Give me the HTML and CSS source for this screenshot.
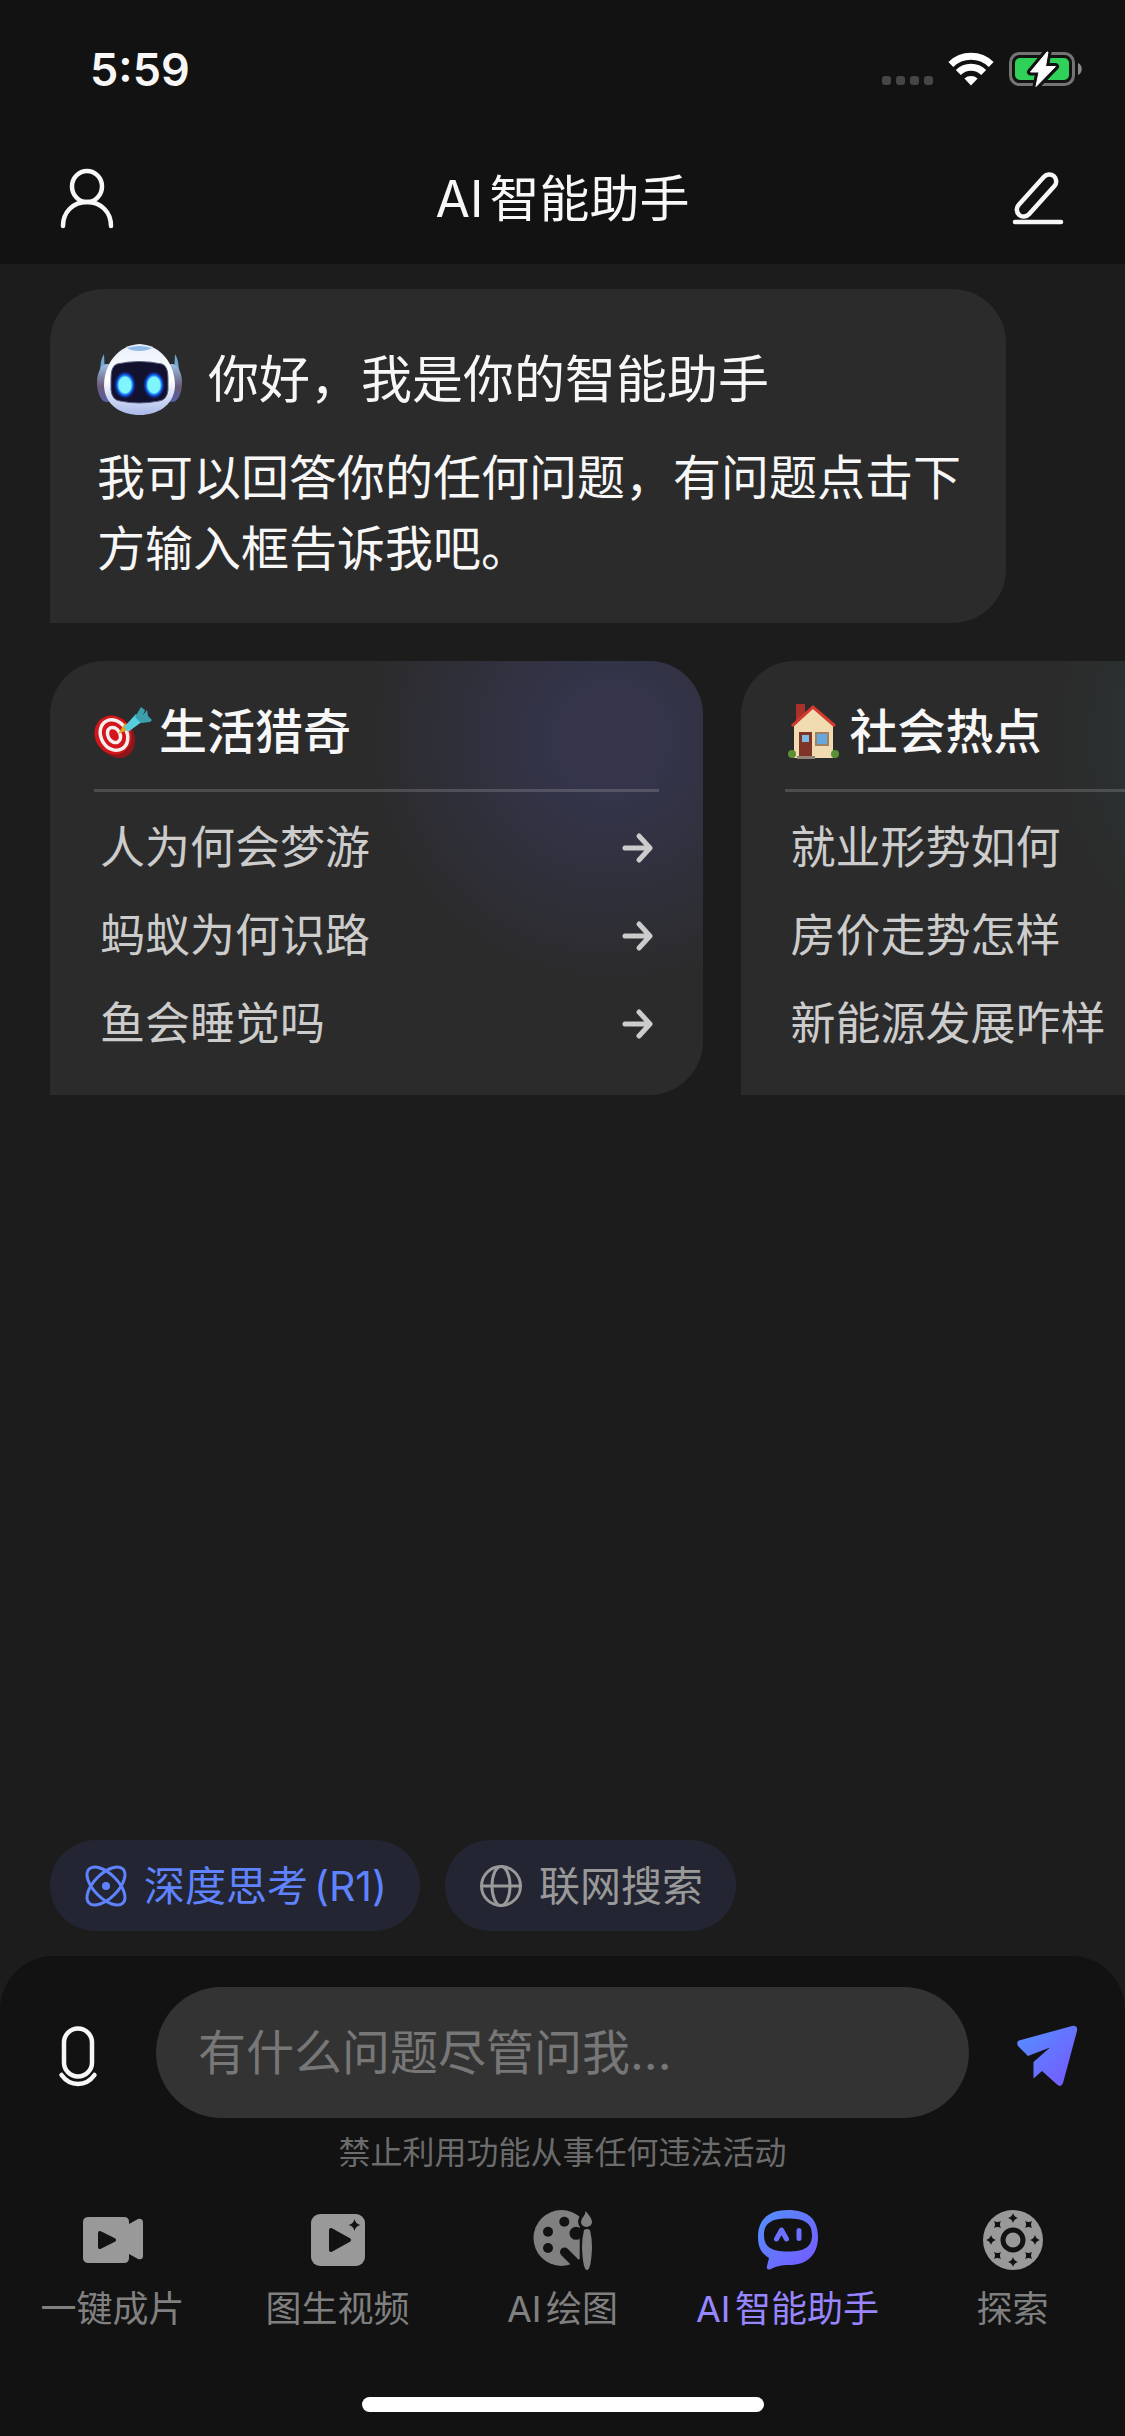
FILE: index.html
```
<!DOCTYPE html>
<html lang="zh-CN">
<head>
    <meta charset="UTF-8">
    <meta name="viewport" content="width=device-width, initial-scale=1">
    <title>AI智能助手</title>
    <link rel="stylesheet" href="styles.css">
</head>
<body>
    <header class="header">
        <div class="status-bar">
            <span class="status-time">5:59</span>
            <div class="status-icons">
                <svg width="51" height="10" viewBox="0 0 51 10" fill="#464646">
                    <rect width="9" height="9" rx="3"/>
                    <rect x="14" width="9" height="9" rx="3"/>
                    <rect x="28" width="9" height="9" rx="3"/>
                    <rect x="42" width="9" height="9" rx="3"/>
                </svg>
                <svg width="46" height="34" viewBox="0 0 46 34" fill="none" stroke="#fff" stroke-width="7">
                    <path d="M2.8 12.4A29 29 0 0 1 43.2 12.4"/>
                    <path d="M10.3 20.4A18 18 0 0 1 35.7 20.4"/>
                    <path d="M23 33.5L16.4 26.4A10 10 0 0 1 29.6 26.4Z" fill="#fff" stroke="none"/>
                </svg>
                <svg width="73" height="34" viewBox="0 0 73 34">
                    <rect x="1.5" y="1.5" width="63" height="31" rx="9" fill="none" stroke="#747474" stroke-width="3"/>
                    <path d="M69 11c5 2 5 10 0 12z" fill="#8a8a8a"/>
                    <rect x="6" y="6" width="54" height="22" rx="5" fill="#30d158"/>
                    <path d="M38 0L21.5 20H30L27 34.5L46.5 14.5H36.5L39 0Z" fill="#fff" stroke="#121212" stroke-width="7" stroke-linejoin="round"/>
                    <path d="M38 0L21.5 20H30L27 34.5L46.5 14.5H36.5L39 0Z" fill="#fff" stroke="#fff" stroke-linejoin="round"/>
                </svg>
            </div>
        </div>
        <div class="app-bar">
            <button class="icon-btn" type="button" aria-label="个人中心">
                <svg width="54" height="60" viewBox="0 0 54 60" fill="none" stroke="#f7f7f7" stroke-width="4.5" stroke-linecap="round">
                    <ellipse cx="27" cy="17.5" rx="15" ry="15.5"/>
                    <path d="M3 57C3 43 13 33 27 33S51 43 51 57"/>
                </svg>
            </button>
            <h1 class="app-title">AI智能助手</h1>
            <button class="icon-btn" type="button" aria-label="新对话">
                <svg width="54" height="54" viewBox="0 0 54 54" fill="none" stroke="#f7f7f7" stroke-width="4.5" stroke-linecap="round">
                    <rect x="-7" y="-26" width="14" height="52" rx="7" transform="translate(25.5 23.5) rotate(42)"/>
                    <path d="M4 50H50"/>
                </svg>
            </button>
        </div>
    </header>

    <main class="chat">
        <section class="welcome">
            <div class="welcome-head">
                <svg width="85" height="72" viewBox="0 0 85 72">
                    <defs>
                        <linearGradient id="shell" x1="0" y1="0" x2="0" y2="1">
                            <stop offset="0" stop-color="#e8effa"/>
                            <stop offset="0.5" stop-color="#ffffff"/>
                            <stop offset="1" stop-color="#a9b9ea"/>
                        </linearGradient>
                        <linearGradient id="ear" x1="0" y1="0" x2="0" y2="1">
                            <stop offset="0" stop-color="#9cc0e6"/>
                            <stop offset="0.6" stop-color="#6b5a78"/>
                            <stop offset="1" stop-color="#5560a8"/>
                        </linearGradient>
                        <radialGradient id="eye">
                            <stop offset="0.55" stop-color="#7ff6ff"/>
                            <stop offset="0.7" stop-color="#1377ff"/>
                            <stop offset="1" stop-color="#0a1fd0" stop-opacity="0"/>
                        </radialGradient>
                    </defs>
                    <path d="M3 30Q3 16 7 10L8 30ZM82 30Q82 16 78 10L77 30Z" fill="#6fa7cf"/>
                    <ellipse cx="10" cy="39" rx="10" ry="19" fill="url(#ear)"/>
                    <ellipse cx="75" cy="39" rx="10" ry="19" fill="url(#ear)"/>
                    <path d="M42.5 0C64 1 78 20 78 42C77 62 60 71 42.5 71S8 62 7 42C7 20 21 1 42.5 0Z" fill="url(#shell)"/>
                    <path d="M30 4Q42 0 55 4Q50 7 42 7T30 4Z" fill="#8fbbe8"/>
                    <path d="M20 20Q42 15 65 20Q71 22 71 34V46Q70 56 62 57Q42 61 23 57Q15 56 14 46V34Q14 22 20 20Z" fill="#12122e" stroke="#565f83" stroke-width="1"/>
                    <ellipse cx="28" cy="41" rx="11" ry="14" fill="url(#eye)"/>
                    <ellipse cx="57" cy="41" rx="11" ry="14" fill="url(#eye)"/>
                </svg>
                <h2 class="welcome-title">你好，我是你的智能助手</h2>
            </div>
            <p class="welcome-text">我可以回答你的任何问题，有问题点击下方输入框告诉我吧。</p>
        </section>

        <div class="topics">
            <section class="topic topic-life">
                <h3 class="topic-title">
                    <svg width="60" height="54" viewBox="0 0 60 54">
                        <ellipse cx="22" cy="32" rx="18" ry="22" fill="#8e1518" transform="rotate(-30 22 32)"/>
                        <ellipse cx="19" cy="30" rx="18" ry="20" fill="#d2161c" transform="rotate(-30 19 30)"/>
                        <g fill="none" stroke="#f4f0ef" stroke-width="3.5" transform="rotate(-30 20 30)">
                            <ellipse cx="20" cy="30" rx="13" ry="16"/>
                            <ellipse cx="20" cy="30" rx="6" ry="8"/>
                        </g>
                        <path d="M24 29L31 18L36 24Z" fill="#e3a526"/>
                        <path d="M30 22L42 9L49 16L34 27Z" fill="#55cfdc"/>
                        <path d="M41 12L47 2L51 5L49 10L53 5L54 11L58 15L56 17L47 18Z" fill="#3b9fae"/>
                    </svg>
                    生活猎奇
                </h3>
                <ul class="topic-list">
                    <li><button class="topic-row" type="button">人为何会梦游<svg width="30" height="30" viewBox="0 0 30 30"><path d="M2 15H27M16 3L27 15L16 27"/></svg></button></li>
                    <li><button class="topic-row" type="button">蚂蚁为何识路<svg width="30" height="30" viewBox="0 0 30 30"><path d="M2 15H27M16 3L27 15L16 27"/></svg></button></li>
                    <li><button class="topic-row" type="button">鱼会睡觉吗<svg width="30" height="30" viewBox="0 0 30 30"><path d="M2 15H27M16 3L27 15L16 27"/></svg></button></li>
                </ul>
            </section>
            <section class="topic topic-news">
                <h3 class="topic-title">
                    <svg width="60" height="56" viewBox="0 0 60 56">
                        <path d="M11 0H20V18H11Z" fill="#a8322b"/>
                        <path d="M9 22L28 4L48 22V54H9Z" fill="#f0dcb0"/>
                        <path d="M7 22L28 3L50 22" fill="none" stroke="#d63a2f" stroke-width="3"/>
                        <path d="M14 28H27V53H14Z" fill="#7e3426"/>
                        <path d="M17 31H24V38H17Z" fill="#7dbbe6"/>
                        <path d="M31 29H43V41H31Z" fill="#65a8dd" stroke="#a08262" stroke-width="2"/>
                        <circle cx="7" cy="50" r="4" fill="#5b9136"/>
                        <circle cx="50" cy="50" r="4" fill="#5b9136"/>
                        <path d="M12 52H30V55H12Z" fill="#8e8577"/>
                    </svg>
                    社会热点
                </h3>
                <ul class="topic-list">
                    <li><button class="topic-row" type="button">就业形势如何<svg width="30" height="30" viewBox="0 0 30 30"><path d="M2 15H27M16 3L27 15L16 27"/></svg></button></li>
                    <li><button class="topic-row" type="button">房价走势怎样<svg width="30" height="30" viewBox="0 0 30 30"><path d="M2 15H27M16 3L27 15L16 27"/></svg></button></li>
                    <li><button class="topic-row" type="button">新能源发展咋样<svg width="30" height="30" viewBox="0 0 30 30"><path d="M2 15H27M16 3L27 15L16 27"/></svg></button></li>
                </ul>
            </section>
        </div>

        <div class="modes">
            <button class="mode mode-on" type="button">
                <svg width="42" height="42" viewBox="0 0 42 42" fill="none" stroke="currentColor" stroke-width="3">
                    <ellipse cx="21" cy="21" rx="12" ry="24" transform="rotate(45 21 21)"/>
                    <ellipse cx="21" cy="21" rx="12" ry="24" transform="rotate(-45 21 21)"/>
                    <circle cx="21" cy="21" r="4" fill="currentColor" stroke="none"/>
                </svg>
                <span>深度思考<span class="mode-tag">(R1)</span></span>
            </button>
            <button class="mode" type="button">
                <svg width="42" height="42" viewBox="0 0 42 42" fill="none" stroke="currentColor" stroke-width="3">
                    <circle cx="21" cy="21" r="19.5"/>
                    <ellipse cx="21" cy="21" rx="9" ry="19.5"/>
                    <path d="M2 21H40"/>
                </svg>
                <span>联网搜索</span>
            </button>
        </div>
    </main>

    <footer class="dock">
        <form class="composer">
            <button class="composer-btn" type="button" aria-label="语音输入">
                <svg width="38" height="60" viewBox="0 0 38 60" fill="none" stroke="#f7f7f7" stroke-width="4.5" stroke-linecap="round">
                    <rect x="5" y="2.5" width="28" height="48" rx="14"/>
                    <path d="M2.5 49Q9 58 19 58T35.5 49"/>
                </svg>
            </button>
            <input class="composer-input" type="text" placeholder="有什么问题尽管问我..." aria-label="输入问题">
            <button class="composer-btn" type="submit" aria-label="发送">
                <svg width="60" height="60" viewBox="0 0 60 60">
                    <defs>
                        <linearGradient id="brand" x1="0" y1="0" x2="1" y2="1">
                            <stop offset="0" stop-color="#5391ff"/>
                            <stop offset="1" stop-color="#7856ff"/>
                        </linearGradient>
                    </defs>
                    <path d="M2 14.5L55 0Q61 -1 60 5L46 57Q44 62 40 58.5L25 45L16.5 52.5V36L33 21.5L11 30L1 20Q-1 16 2 14.5Z" fill="url(#brand)"/>
                </svg>
            </button>
        </form>
        <p class="disclaimer">禁止利用功能从事任何违法活动</p>
        <nav class="tabs">
            <a class="tab" href="#film">
                <svg width="60" height="60" viewBox="0 0 60 60">
                    <path d="M6 7H41Q46 7 46 12V14L55 9Q60 8 60 13V46Q60 50 55 49L46 44V48Q46 53 41 53H6Q0 53 0 48V12Q0 7 6 7Z" fill="#999"/>
                    <path d="M17 23L31 30L17 37Z" fill="#121212" stroke="#121212" stroke-width="4" stroke-linejoin="round"/>
                </svg>
                一键成片
            </a>
            <a class="tab" href="#video">
                <svg width="60" height="60" viewBox="0 0 60 60">
                    <rect x="3" y="4" width="54" height="52" rx="9" fill="#999"/>
                    <path d="M23 20L41 30L23 40Z" fill="#121212" stroke="#121212" stroke-width="4" stroke-linejoin="round"/>
                    <path d="M46.5 9Q47.5 14 52.5 15Q47.5 16 46.5 21Q45.5 16 40.5 15Q45.5 14 46.5 9Z" fill="#121212"/>
                </svg>
                图生视频
            </a>
            <a class="tab" href="#draw">
                <svg width="60" height="60" viewBox="0 0 60 60">
                    <circle cx="28.5" cy="28" r="28" fill="#808080"/>
                    <g fill="#121212">
                        <circle cx="15" cy="21.7" r="5"/>
                        <circle cx="15" cy="38" r="5"/>
                        <circle cx="31.3" cy="11.7" r="5"/>
                        <circle cx="43" cy="23.3" r="6.5"/>
                        <path d="M46.7 17H60V60H46.7Z"/>
                        <circle cx="53" cy="11.5" r="8"/>
                    </g>
                    <path d="M31.5 42L50 60.5" stroke="#121212" stroke-width="9" stroke-linecap="round"/>
                    <path d="M52.5 1Q59 8 59 12A5.5 5 0 0 1 48 12Q48 9 50.5 6.5Q52.5 4 52.5 1ZM51 20Q54 18 57 20Q59 28 59 38Q58 60 54 60T49 38Q49 28 51 20Z" fill="#808080"/>
                </svg>
                AI绘图
            </a>
            <a class="tab tab-active" href="#chat" aria-current="page">
                <svg width="60" height="60" viewBox="0 0 60 60">
                    <path d="M30 0C50 0 60 9 60 27C60 45 49 55 31 55C23 55 19 56 13 59Q8 61 9 56L11 48C3 43 0 37 0 27C0 9 11 0 30 0ZM30 8.5C12 8.5 6 14 6 25S12 41.5 30 41.5S54 36 54 25S48 8.5 30 8.5Z" fill="url(#brand)" fill-rule="evenodd"/>
                    <path d="M18.5 29L23.5 20L28.5 29M41 20.5V28.5" fill="none" stroke="#6b70ff" stroke-width="5" stroke-linecap="round" stroke-linejoin="round"/>
                </svg>
                AI智能助手
            </a>
            <a class="tab" href="#explore">
                <svg width="60" height="60" viewBox="0 0 60 60">
                    <defs>
                        <path id="spark" d="M30 3Q31 7 35 8Q31 9 30 13Q29 9 25 8Q29 7 30 3Z"/>
                    </defs>
                    <circle cx="30" cy="30" r="30" fill="#999"/>
                    <circle cx="30" cy="30" r="10" fill="none" stroke="#121212" stroke-width="5"/>
                    <g fill="#121212">
                        <use href="#spark"/>
                        <use href="#spark" transform="rotate(45 30 30)"/>
                        <use href="#spark" transform="rotate(90 30 30)"/>
                        <use href="#spark" transform="rotate(135 30 30)"/>
                        <use href="#spark" transform="rotate(180 30 30)"/>
                        <use href="#spark" transform="rotate(225 30 30)"/>
                        <use href="#spark" transform="rotate(270 30 30)"/>
                        <use href="#spark" transform="rotate(315 30 30)"/>
                    </g>
                </svg>
                探索
            </a>
        </nav>
        <div class="home-indicator"></div>
    </footer>
</body>
</html>
```

FILE: styles.css
```
* {
    box-sizing: border-box;
}
body {
    display: flex;
    flex-direction: column;
    min-height: 100vh;
    margin: 0;
    overflow-x: hidden;
    background-color: #1c1c1c;
    color: #f7f7f7;
    font-family: Inter, "Noto Sans CJK SC", sans-serif;
    text-autospace: normal;
}
h1, h2, h3, p, ul {
    margin: 0;
    padding: 0;
    font-weight: 400;
}
button {
    padding: 0;
    border: 0;
    background: none;
    color: inherit;
    font: inherit;
}
svg {
    display: block;
    flex: none;
    overflow: visible;
}

/* Header */
.header {
    background-color: #121212;
}
.status-bar {
    display: flex;
    justify-content: space-between;
    align-items: center;
    height: 138px;
    padding: 0 43px 0 90px;
}
.status-time {
    font-size: 45px;
    font-weight: 600;
}
.status-icons {
    display: flex;
    align-items: flex-end;
    gap: 15px;
}
.app-bar {
    display: flex;
    justify-content: space-between;
    align-items: center;
    height: 126px;
    padding: 0 50px 5px;
}
.icon-btn {
    display: flex;
    justify-content: center;
    width: 74px;
}
.app-title {
    font-size: 50px;
    line-height: 72px;
}

/* Chat area */
.chat {
    display: flex;
    flex: 1;
    flex-direction: column;
    padding: 25px 0;
}
.welcome {
    width: 85vw;
    margin-left: 50px;
    padding: 55px 44px 39px 47px;
    border-radius: 54px 54px 54px 0;
    background-color: #2b2b2b;
}
.welcome-head {
    display: flex;
    align-items: center;
    gap: 26px;
    margin-bottom: 26px;
}
.welcome-title {
    font-size: 51px;
    line-height: 72px;
}
.welcome-text {
    font-size: 48px;
    line-height: 71px;
}
.topics {
    display: flex;
    gap: 38px;
    margin-top: 38px;
    padding: 0 50px;
    overflow-x: auto;
    scrollbar-width: none;
}
.topic {
    flex: none;
    width: 58vw;
    padding: 38px 44px 27px;
    border-radius: 54px 54px 54px 0;
    background-color: #2b2b2b;
}
.topic-life {
    background-image: radial-gradient(circle at 86% 18%, #36354c 0, #34344a 60px, #2b2b2b 250px);
}
.topic-news {
    background-image: radial-gradient(circle at 86% 18%, #2b3b3c 0, #2b393a 60px, #2b2b2b 250px);
}
.topic-title {
    display: flex;
    align-items: center;
    gap: 5px;
    padding-bottom: 24px;
    border-bottom: 3px solid rgba(255, 255, 255, 0.16);
    font-size: 48px;
    font-weight: 500;
    line-height: 66px;
}
.topic-list {
    padding-top: 12px;
    list-style: none;
}
.topic-row {
    display: flex;
    justify-content: space-between;
    align-items: center;
    width: 100%;
    height: 88px;
    padding: 0 6px;
    color: #ccc;
    font-size: 45px;
    line-height: 60px;
}
.topic-row svg {
    fill: none;
    stroke: #ccc;
    stroke-width: 5;
    stroke-linecap: round;
    stroke-linejoin: round;
}
.modes {
    display: flex;
    gap: 25px;
    margin-top: auto;
    padding: 0 50px;
}
.mode {
    display: flex;
    align-items: center;
    gap: 17px;
    height: 91px;
    padding: 0 33px 0 35px;
    border-radius: 46px;
    background-color: #232632;
    color: #999;
    font-size: 41px;
    line-height: 60px;
}
.mode-on {
    color: #5f83ff;
}
.mode-tag {
    margin-left: 6px;
}

/* Bottom dock */
.dock {
    border-radius: 54px 54px 0 0;
    background-color: #121212;
}
.composer {
    display: flex;
    align-items: center;
    padding-top: 31px;
}
.composer-btn {
    display: flex;
    justify-content: center;
    width: 156px;
    padding-top: 6px;
}
.composer-input {
    flex: 1;
    min-width: 0;
    height: 131px;
    padding: 0 42px;
    border: 0;
    border-radius: 66px;
    outline: 0;
    background-color: #333;
    color: #f7f7f7;
    font: inherit;
    font-size: 48px;
    text-autospace: no-autospace;
}
.composer-input::placeholder {
    color: #777;
    opacity: 1;
}
.disclaimer {
    margin-top: 13px;
    color: #6c6c6c;
    font-size: 32px;
    line-height: 44px;
    text-align: center;
}
.tabs {
    display: flex;
    margin-top: 35px;
}
.tab {
    display: flex;
    flex: 1;
    flex-direction: column;
    align-items: center;
    gap: 14px;
    color: #808080;
    font-size: 36px;
    line-height: 50px;
    text-decoration: none;
    white-space: nowrap;
}
.tab-active {
    color: #9786ff;
}
.home-indicator {
    width: 402px;
    height: 15px;
    margin: 63px auto 24px;
    border-radius: 8px;
    background-color: #fff;
}
```
